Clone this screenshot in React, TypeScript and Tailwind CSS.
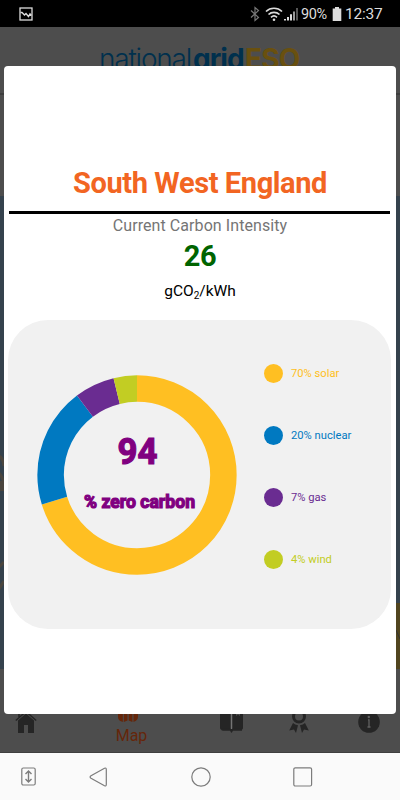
import clsx from "clsx";

type Slice = {
  label: string;
  share: number;
  color: string;
  dot: string;
  text: string;
};

const MIX: Slice[] = [
  { label: "70% solar", share: 70.2, color: "#ffbf22", dot: "bg-[#ffbf22]", text: "text-[#ffbf22]" },
  { label: "20% nuclear", share: 19.5, color: "#0079c1", dot: "bg-[#0079c1]", text: "text-[#0079c1]" },
  { label: "7% gas", share: 6.5, color: "#6a2c91", dot: "bg-[#6a2c91]", text: "text-[#6a2c91]" },
  { label: "4% wind", share: 3.8, color: "#c2cd23", dot: "bg-[#c2cd23]", text: "text-[#c2cd23]" },
];

function StatusBar() {
  return (
    <header className="flex h-[27px] shrink-0 items-center bg-black pl-[19px] pr-[17px] pt-px text-[#dcdcdc]">
      <svg width="14" height="14" viewBox="0 0 14 14" fill="none" stroke="currentColor">
        <rect x="1" y="1" width="12" height="12" strokeWidth="1.3" />
        <path d="M1.5 5.5H3L5.5 8 7 6.5l2.5 3L11 7l1.5 1.5" strokeWidth="1.4" />
      </svg>
      <svg className="ml-auto -translate-x-px" width="10" height="16" viewBox="0 0 10 16" fill="none" stroke="#777" strokeWidth="1.2">
        <path d="M1 4.5l7.5 7L5 14.5V1.5l3.5 3-7.5 7" />
      </svg>
      <svg className="ml-[4px]" width="18" height="16" viewBox="0 0 18 16" fill="none" stroke="currentColor" strokeWidth="1.7">
        <path d="M1 5.5a11.5 11.5 0 0 1 16 0M3.5 8.5a8 8 0 0 1 11 0M6 11.3a4.5 4.5 0 0 1 6 0" />
        <circle cx="9" cy="13.7" r="1.3" fill="currentColor" stroke="none" />
      </svg>
      <svg className="ml-px" width="15" height="16" viewBox="0 0 15 16">
        <path d="M0 13h2v1.5H0zM3 11h2v3.5H3zM6 8.3h2v6.2H6z" fill="currentColor" />
        <path d="M9 5.5h2v9H9z" fill="#999" />
        <path d="M12 2h2v12.5h-2z" fill="#555" />
      </svg>
      <span className="ml-[2px] w-[28px] whitespace-nowrap pt-[2px] text-[14.5px] leading-none tracking-[-0.4px]">90%</span>
      <svg className="ml-[3px]" width="10" height="14" viewBox="0 0 10 14" fill="currentColor">
        <path d="M3 0h4v1.5h2.3V14H.7V1.5H3z" />
      </svg>
      <span className="ml-[3px] w-[38px] whitespace-nowrap pt-[2px] text-[15.5px] leading-none tracking-[-0.2px]">12:37</span>
    </header>
  );
}

// the page underneath, already dimmed by the modal's backdrop
function Backdrop() {
  return (
    <div className="flex h-full flex-col bg-[#4d4d4d]">
      <div className="flex h-[68px] shrink-0 justify-center border-b-2 border-[#3d3d3d] pt-[14px]">
        <div className="whitespace-nowrap font-['Inter','Liberation_Sans',sans-serif] text-[28px] leading-[37px] text-[#00304d]">
          <span className="inline-block w-[94px] font-light tracking-[-1.2px]">national</span>
          <span className="inline-block w-[52px] font-bold tracking-[-1px]">grid</span>
          <span className="inline-block w-[56px] font-bold tracking-[-0.8px] text-[#69500f]">ESO</span>
        </div>
      </div>
      <div className="h-[101px] shrink-0" />
      <svg className="block h-[473px] w-full shrink-0" viewBox="0 0 400 473">
        <rect width="400" height="473" fill="#35424d" />
        <g fill="none" stroke="#4b463f" strokeWidth="3">
          <path d="M-1 260q4 2 5 10M-1 277q4 4 5 12M-1 371l5-5M-1 393l5-8" />
          <path d="M0 290h4" strokeWidth="10" />
        </g>
        <path d="M396 407h4v66h-4z" fill="#51451f" />
        <path d="M396 434l4 9" stroke="#333" />
      </svg>
      <nav className="flex grow items-end border-b border-[#3f3f3f] pb-[6px] text-[#252525]">
        <svg className="mb-[13px] ml-[15px]" width="22" height="24" viewBox="0 0 22 24" fill="currentColor">
          <path d="M11 4.5l8 7V24h-6v-8H9v8H3V11.5z" />
          <path d="M.8 11.5L11 2.5l10.2 9M4 8V3" fill="none" stroke="currentColor" strokeWidth="1.5" />
        </svg>
        <div className="ml-[79px] flex w-[31px] flex-col items-center text-[#65260a]">
          <svg className="-translate-x-[3.5px]" width="21" height="20" viewBox="0 0 21 20" fill="currentColor">
            <path d="M.5 2l4.8-2v20l-3-1.2Q.5 18 .5 15zM6.300 0l3.700 2v16.500l-3.700 1.500zM11.200 2l3.700-2v20l-3.700-1.500zM16 0l4.500 2v13q0 3-2 3.800L16 20z" />
          </svg>
          <span className="mt-[4px] text-[16px] leading-[20px]">Map</span>
        </div>
        <svg className="mb-[13px] ml-[73px]" width="23" height="24" viewBox="0 0 23 24" fill="currentColor">
          <path d="M0 2h10.5v18.5h-9Q0 20.5 0 19zM12.5 2H16v5l2-1.500L20 7V2h3v17q0 1.500-1.500 1.500h-9z" />
          <path d="M1 19.8h21v2h-9L11.500 24 10 21.800H3q-2 0-2-2z" />
          <path d="M11.5 2v18" stroke="#747474" />
        </svg>
        <svg className="mb-[13px] ml-[46px]" width="20" height="25" viewBox="0 0 20 25" fill="currentColor">
          <circle cx="10" cy="8.5" r="5.5" fill="none" stroke="currentColor" strokeWidth="3" />
          <path d="M4 15q2 2 5 2.200L7 25l-2-3.500-4.800 1zM16 15q-2 2-5 2.200L13 25l2-3.500 4.800 1z" />
        </svg>
        <svg className="mb-[13px] ml-[49px]" width="22" height="22" viewBox="0 0 22 22">
          <circle cx="11" cy="11" r="10.8" fill="currentColor" />
          <path d="M10 8.800h1v7.200M9.500 16h3" fill="none" stroke="#606060" strokeWidth="1.300" />
          <circle cx="10.8" cy="6" r="1.2" fill="#606060" />
        </svg>
      </nav>
    </div>
  );
}

function Donut() {
  let start = 0;
  return (
    <svg width="200" height="200" viewBox="-100 -100 200 200">
      <g transform="rotate(-90)" fill="none" strokeWidth="26.5">
        {MIX.map((s) => {
          const offset = -start;
          start += s.share;
          return (
            <circle
              key={s.label}
              r="86.4"
              stroke={s.color}
              pathLength="100"
              strokeDasharray={`${s.share} ${100 - s.share}`}
              strokeDashoffset={offset}
            />
          );
        })}
      </g>
      <g fill="#800080" stroke="#800080" textAnchor="middle" fontWeight="bold">
        <text x="0.5" y="-11" fontSize="36" strokeWidth="1.2" textLength="40" lengthAdjust="spacingAndGlyphs">94</text>
        <text x="2.5" y="33" fontSize="18" strokeWidth="1.2" textLength="111" lengthAdjust="spacingAndGlyphs">% zero carbon</text>
      </g>
    </svg>
  );
}

function RegionModal() {
  return (
    <section className="absolute left-1 top-[39px] flex h-[647.5px] w-[392px] flex-col items-center rounded-[4px] bg-white pr-px pt-[98px]">
      <h1 className="whitespace-nowrap pl-px text-[29px] font-bold leading-[38px] tracking-[-0.4px] text-[#f26522]">South West England</h1>
      <div className="mt-[9px] h-[2.5px] w-[381px] shrink-0 bg-black" />
      <p className="mt-[2.5px] pl-px text-[16px] leading-[20px] tracking-[0.07px] text-[#757575]">Current Carbon Intensity</p>
      <p className="mt-[3px] pl-px text-[29px] font-bold leading-[34px] tracking-[-0.3px] text-[#006400]">26</p>
      <p className="mt-[8px] pl-px text-[15.5px] leading-[20px] text-black">
        gCO<sub className="text-[10px]">2</sub>/kWh
      </p>
      <div className="mt-[19px] flex h-[309px] w-[383px] shrink-0 items-center rounded-[40px] bg-[#f1f1f1] pl-[29px]">
        <Donut />
        <ul className="-mt-[16px] ml-[27px] flex flex-col gap-[42px]">
          {MIX.map((s) => (
            <li key={s.label} className={clsx("flex h-[20px] items-center gap-[8px] text-[11.2px]", s.text)}>
              <span className={clsx("h-[19px] w-[19px] rounded-full", s.dot)} />
              <span className="pt-[2px]">{s.label}</span>
            </li>
          ))}
        </ul>
      </div>
    </section>
  );
}

function SystemNav() {
  return (
    <footer className="flex h-[47px] shrink-0 items-center bg-[#fafafa] pl-[21px]">
      <svg width="15" height="19" viewBox="0 0 15 19" fill="none" stroke="#7c7c7c" strokeWidth="1.2">
        <rect x="0.8" y="1" width="13.4" height="17" rx="1.5" />
        <path d="M7.5 4v11M4.5 7l3-3 3 3M4.5 12l3 3 3-3" strokeWidth="1.4" />
      </svg>
      <svg className="ml-[53px]" width="19" height="20" viewBox="0 0 19 20" fill="none" stroke="#7c7c7c" strokeWidth="1.2">
        <path d="M15.5 1.2Q17.3.5 17.3 2.5v15q0 2-1.800 1.300L2 11.200q-1.800-1.200 0-2.400z" />
      </svg>
      <svg className="ml-[83px]" width="20" height="20" viewBox="0 0 20 20" fill="none" stroke="#7c7c7c" strokeWidth="1.2">
        <circle cx="10" cy="10" r="9.2" />
      </svg>
      <svg className="ml-[82px]" width="20" height="20" viewBox="0 0 20 20" fill="none" stroke="#7c7c7c" strokeWidth="1.2">
        <rect x="0.8" y="0.8" width="17.8" height="18.2" rx="1.5" />
      </svg>
    </footer>
  );
}

export default function App() {
  return (
    <div className="flex h-[800px] w-[400px] flex-col overflow-hidden font-['Roboto',sans-serif]">
      <StatusBar />
      <main className="relative h-[726px] shrink-0">
        <Backdrop />
        <RegionModal />
      </main>
      <SystemNav />
    </div>
  );
}
